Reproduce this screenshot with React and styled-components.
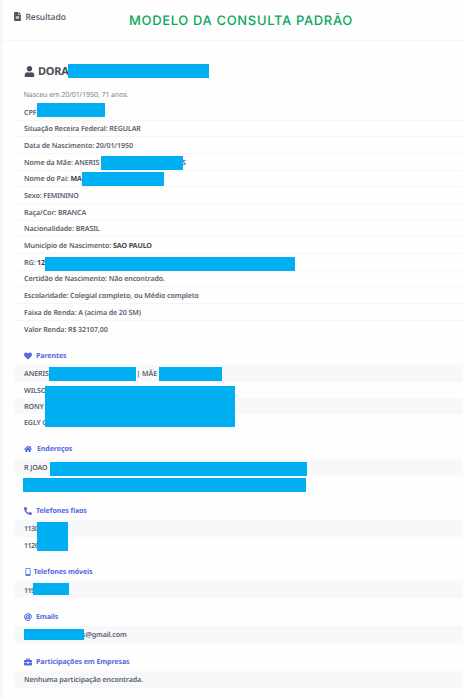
import React from 'react'
import styled, { createGlobalStyle } from 'styled-components'
import { FaFileAlt, FaUser, FaHeart, FaHome, FaPhoneAlt, FaMobileAlt, FaAt, FaBriefcase } from 'react-icons/fa'

const info = [
  { text: 'CPF', masks: [[23, -1, 67.5, 14]] },
  { text: 'Situação Receira Federal: REGULAR' },
  { text: 'Data de Nascimento: 20/01/1950' },
  { text: 'Nome da Mãe: ANERIS', tail: 'S', tailAt: 168, masks: [[87, 2, 82, 14]] },
  { text: 'Nome do Pai: ', strong: 'MA', masks: [[68, 1.4, 82, 14]] },
  { text: 'Sexo: FEMININO' },
  { text: 'Raça/Cor: BRANCA' },
  { text: 'Nacionalidade: BRASIL' },
  { text: 'Município de Nascimento: ', strong: 'SAO PAULO' },
  { text: 'RG: ', strong: '12', masks: [[31, 2.6, 250, 14]] },
  { text: 'Certidão de Nascimento: Não encontrado.' },
  { text: 'Escolaridade: Colegial completo, ou Médio completo' },
  { text: 'Faixa de Renda: A (acima de 20 SM)' },
  { text: 'Valor Renda: R$ 32107,00' },
]

const sections = [
  {
    title: 'Parentes',
    icon: FaHeart,
    rows: [
      { text: 'ANERIS', tail: '| MÃE', tailAt: 122.5, masks: [[35, 2, 86.5, 14], [144.5, 2, 63.5, 14]] },
      { text: 'WILSO', masks: [[30.6, 4.5, 190.6, 41]] },
      { text: 'RONY' },
      { text: 'EGLY G' },
    ],
  },
  {
    title: 'Endereços',
    icon: FaHome,
    iconWidth: 13,
    rows: [
      { text: 'R JOAO', masks: [[36.3, 3, 257, 14]] },
      { text: '', masks: [[9, 2.7, 282.6, 14]] },
    ],
  },
  {
    title: 'Telefones fixos',
    icon: FaPhoneAlt,
    rows: [{ text: '1130', tight: true, masks: [[23, 2, 31, 29]] }, { text: '1126', tight: true }],
  },
  {
    title: 'Telefones móveis',
    icon: FaMobileAlt,
    iconWidth: 9.5,
    rows: [{ text: '119', tight: true, masks: [[19, 2, 35.5, 12]] }],
  },
  {
    title: 'Emails',
    icon: FaAt,
    rows: [{ text: '', tail: 's@gmail.com', tailAt: 68, masks: [[10, 2.3, 60, 11.3]] }],
  },
  {
    title: 'Participações em Empresas',
    icon: FaBriefcase,
    rows: [{ text: 'Nenhuma participação encontrada.' }],
  },
]

const Line = ({ as: Tag, item }) => (
  <Tag $tight={item.tight}>
    <span>{item.text}{item.strong && <Strong>{item.strong}</Strong>}</span>
    {item.tail && <Tail $at={item.tailAt}>{item.tail}</Tail>}
    {item.masks && item.masks.map(([x, y, w, h]) => (
      <Mask key={x} $x={x} $y={y} $w={w} $h={h} />
    ))}
  </Tag>
)

const App = () => {
  return (
    <Page>
      <GlobalStyle />
      <Card>
        <Header>
          <FaFileAlt size={9} />
          <HeaderText>Resultado</HeaderText>
          <Banner>MODELO DA CONSULTA PADRÃO</Banner>
        </Header>

        <Content>
          <Name>
            <FaUser size={11} />
            <span>DORA</span>
            <Mask $x={54} $y={3} $w={141} $h={14} />
          </Name>
          <Born>Nasceu em 20/01/1950, 71 anos.</Born>

          <InfoList>
            {info.map((item) => <Line key={item.text} as={InfoRow} item={item} />)}
          </InfoList>

          {sections.map(({ title, icon: Icon, iconWidth, rows }) => (
            <Section key={title}>
              <SectionTitle>
                <IconBox $w={iconWidth || 12}><Icon size={8} /></IconBox>
                <span>{title}</span>
              </SectionTitle>
              {rows.map((item, i) => <Line key={i} as={StripedRow} item={item} />)}
            </Section>
          ))}
        </Content>
      </Card>
    </Page>
  )
}

const GlobalStyle = createGlobalStyle`
* {
  box-sizing: border-box;
}
body {
  margin: 0;
  overflow: hidden;
  background-color: #f6f7fc;
}
`;

const Page = styled.div`
height: 698px;
padding-left: 3px;
overflow: hidden;
font-family: "Noto Sans", "Open Sans", sans-serif;
text-rendering: geometricPrecision;
color: #5c606d;
`;

const Card = styled.div`
height: 100%;
background-color: #fefefe;
`;

const Header = styled.div`
display: flex;
align-items: center;
height: 41px;
padding: 0 0 7px 10px;
border-bottom: 1px solid #f5f5f8;
color: #50545f;
`;

const HeaderText = styled.span`
margin-left: 3.5px;
width: 103.5px;
font-size: 8.6px;
font-weight: 500;
letter-spacing: -0.07px;
`;

const Banner = styled.span`
margin-top: 9px;
font-family: Inter, sans-serif;
font-size: 13px;
font-weight: 500;
letter-spacing: 0.65px;
white-space: nowrap;
color: #0aa85a;
`;

const Content = styled.div`
padding: 20px 0 0 11px;
`;

const Name = styled.div`
position: relative;
display: flex;
align-items: center;
gap: 3.5px;
height: 20px;
padding: 0 0 0 9.5px;
font-size: 11px;
font-weight: 700;
letter-spacing: -0.2px;
color: #494d59;
`;

const Born = styled.div`
height: 23px;
padding: 7px 0 0 9.5px;
font-size: 7.1px;
line-height: 14px;
letter-spacing: -0.11px;
color: #7b7f8c;
`;

const InfoList = styled.div`
height: 241px;
`;

const Row = styled.div`
position: relative;
display: flex;
align-items: center;
padding: 2px 0 0 10px;
font-size: 7.1px;
font-weight: 600;
letter-spacing: ${(p) => (p.$tight ? '-0.5px' : '-0.11px')};
white-space: pre;
`;

const InfoRow = styled(Row)`
height: 16.67px;
border-bottom: 1px solid #f5f5f8;
&:last-child {
  border-bottom: none;
}
`;

const StripedRow = styled(Row)`
height: 16.3px;
border-radius: 3px 0 0 3px;
&:nth-child(even) {
  background-color: #f7f8fa;
}
`;

const Strong = styled.b`
font-weight: 700;
color: #41454f;
`;

const Tail = styled.span`
position: absolute;
left: ${(p) => p.$at}px;
`;

// blue block laid over private data
const Mask = styled.div`
position: absolute;
z-index: 1;
left: ${(p) => p.$x}px;
top: ${(p) => p.$y}px;
width: ${(p) => p.$w}px;
height: ${(p) => p.$h}px;
background-color: #00aff2;
`;

const Section = styled.div`
margin-bottom: 8.3px;
`;

const SectionTitle = styled.div`
display: flex;
align-items: center;
height: 20.3px;
padding: 1px 0 0 10px;
font-size: 7.1px;
font-weight: 700;
letter-spacing: -0.11px;
color: #5369e2;
`;

const IconBox = styled.span`
display: flex;
width: ${(p) => p.$w}px;
`;

export default App
